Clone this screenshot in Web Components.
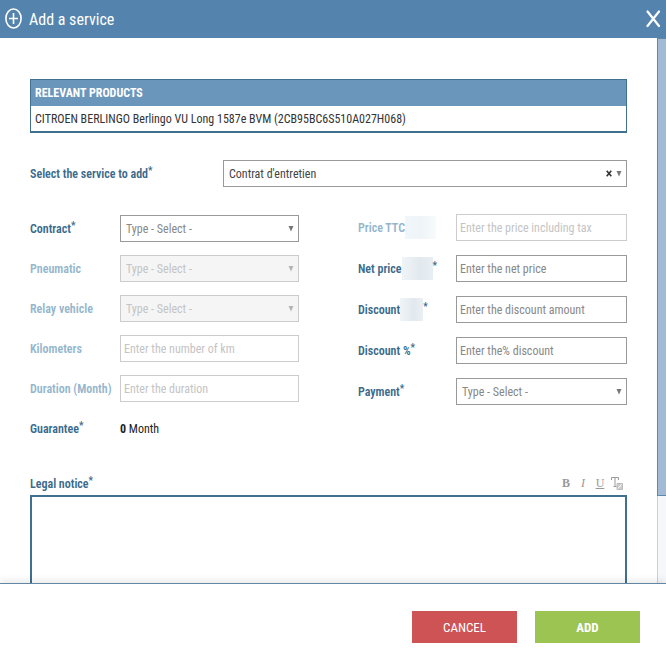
<!DOCTYPE html>
<html lang="en">
<head>
<meta charset="utf-8">
<meta name="viewport" content="width=device-width, initial-scale=1">
<title>Add a service</title>
<style>
  body {
    margin: 0;
    background: #fff;
    font-family: "Roboto Condensed", Roboto, "Liberation Sans", sans-serif;
    font-size: 13px;
    --ink: #3a6a8c;
    --line: #3f708e;
    --size: 12px;
  }
</style>
</head>
<body>

<service-dialog heading="Add a service">
  <product-list heading="Relevant products">CITROEN BERLINGO Berlingo VU Long 1587e BVM (2CB95BC6S510A027H068)</product-list>

  <form-field class="service" kind="select" label="Select the service to add" value="Contrat d'entretien" required clearable></form-field>

  <field-columns>
    <form-field slot="left" kind="select" label="Contract" value="Type - Select -" required></form-field>
    <form-field slot="left" kind="select" label="Pneumatic" value="Type - Select -" disabled></form-field>
    <form-field slot="left" kind="select" label="Relay vehicle" value="Type - Select -" disabled></form-field>
    <form-field slot="left" label="Kilometers" placeholder="Enter the number of km" disabled></form-field>
    <form-field slot="left" label="Duration (Month)" placeholder="Enter the duration" disabled></form-field>
    <form-field slot="left" kind="output" label="Guarantee" value="0" unit="Month" required></form-field>

    <form-field slot="right" label="Price TTC" placeholder="Enter the price including tax" masked disabled></form-field>
    <form-field slot="right" label="Net price" placeholder="Enter the net price" masked required></form-field>
    <form-field slot="right" label="Discount" placeholder="Enter the discount amount" masked="short" required></form-field>
    <form-field slot="right" label="Discount %" placeholder="Enter the% discount" required></form-field>
    <form-field slot="right" kind="select" label="Payment" value="Type - Select -" required></form-field>
  </field-columns>

  <notice-editor label="Legal notice"></notice-editor>

  <action-button slot="actions" tone="cancel">CANCEL</action-button>
  <action-button slot="actions" tone="confirm">ADD</action-button>
</service-dialog>

<script>
;(function () {
  class BaseElement extends HTMLElement {
    constructor () {
      super()
      this.attachShadow({ mode: 'open' })
    }

    connectedCallback () {
      this.shadowRoot.innerHTML = this.render()
      this.ready()
    }

    attr (name) {
      return this.getAttribute(name) || ''
    }

    ready () {}
  }

  class ServiceDialog extends BaseElement {
    render () {
      return `
<style>
  :host {
    display: flex;
    flex-direction: column;
    height: 100vh;
  }
  header {
    display: flex;
    align-items: center;
    gap: 7px;
    height: 38px;
    padding: 0 5px;
    box-sizing: border-box;
    background: #5484ae;
    color: #fff;
  }
  h1 {
    flex: 1;
    margin: 0;
    font-size: 16px;
    font-weight: 400;
  }
  .close {
    display: flex;
    padding: 0;
    border: 0;
    background: none;
    color: inherit;
    cursor: pointer;
  }
  .view {
    flex: 1;
    display: flex;
    min-height: 0;
  }
  .content {
    flex: 1;
    overflow-y: scroll;
    scrollbar-width: none;
    padding: 41px 30px 35px;
  }
  .content::-webkit-scrollbar {
    display: none;
  }
  ::slotted(.service) {
    --label-width: 193px;
    margin: 27px 0;
  }
  .track {
    flex: none;
    width: 8px;
    border-left: 1px solid #c3d3e4;
    background: #f5f7fb;
  }
  .thumb {
    margin-left: -1px;
    box-sizing: border-box;
    border: solid #5b89ab;
    border-width: 1px 0 1px 1px;
    background: #a2bad6;
  }
  footer {
    display: flex;
    justify-content: flex-end;
    gap: 18px;
    padding: 27px 26px 23px;
    border-top: 1px solid #6286a4;
    box-shadow: 0 -2px 8px rgba(0, 0, 0, .1);
    z-index: 1;
  }
</style>
<header>
  <svg width="17" height="22" viewBox="0 0 17 22" fill="none" stroke="currentColor" stroke-width="1.600" aria-hidden="true">
    <ellipse cx="8.500" cy="10.500" rx="7.600" ry="9.500"/>
    <path d="M8.500 5v11M4 10.500h9"/>
  </svg>
  <h1>${this.attr('heading')}</h1>
  <button class="close" type="button" aria-label="Close">
    <svg width="16" height="18" viewBox="0 0 16 18" fill="none" stroke="currentColor" stroke-width="2.200" stroke-linecap="round">
      <path d="M2.500 1.500L14 16M14 1.500L2.500 16"/>
    </svg>
  </button>
</header>
<div class="view">
  <div class="content"><slot></slot></div>
  <div class="track"><div class="thumb"></div></div>
</div>
<footer><slot name="actions"></slot></footer>`
    }

    ready () {
      this.content = this.shadowRoot.querySelector('.content')
      this.thumb = this.shadowRoot.querySelector('.thumb')
      this.content.addEventListener('scroll', () => this.updateThumb())
      this.observer = new ResizeObserver(() => this.updateThumb())
      this.observer.observe(this.content)
    }

    updateThumb () {
      const { clientHeight, scrollHeight, scrollTop } = this.content
      this.thumb.style.height = `${Math.round(clientHeight * clientHeight / scrollHeight)}px`
      this.thumb.style.transform = `translateY(${Math.round(scrollTop * clientHeight / scrollHeight)}px)`
    }

    disconnectedCallback () {
      this.observer.disconnect()
    }
  }

  class ProductList extends BaseElement {
    render () {
      return `
<style>
  :host {
    display: block;
  }
  table {
    width: 100%;
    border: 1px solid var(--line);
    border-bottom-width: 2px;
    border-spacing: 0;
    font-size: var(--size);
    line-height: 16px;
  }
  th, td {
    height: 26px;
    padding: 0 4px;
    box-sizing: border-box;
    text-align: left;
  }
  th {
    background: #6b96bc;
    color: #fff;
    text-transform: uppercase;
  }
  td {
    height: 25px;
    color: #333;
  }
</style>
<table>
  <thead><tr><th scope="col">${this.attr('heading')}</th></tr></thead>
  <tbody><tr><td><slot></slot></td></tr></tbody>
</table>`
    }
  }

  class FieldColumns extends BaseElement {
    render () {
      return `
<style>
  :host {
    display: grid;
    grid-template-columns: 1fr 1fr;
    gap: 59px;
  }
  div {
    display: flex;
    flex-direction: column;
    justify-content: flex-end;
    gap: 13px;
    padding-top: 1px;
    --label-width: 90px;
  }
  .right {
    justify-content: flex-start;
    gap: 14px;
    padding-top: 0;
    --label-width: 98px;
  }
</style>
<div><slot name="left"></slot></div>
<div class="right"><slot name="right"></slot></div>`
    }
  }

  class FormField extends BaseElement {
    control () {
      const disabled = this.hasAttribute('disabled') ? 'disabled' : ''
      switch (this.attr('kind')) {
        case 'select':
          return `
<span class="select">
  <select id="control" ${disabled}><option>${this.attr('value')}</option></select>
  <span class="tools">
    ${this.hasAttribute('clearable') ? '<button type="button" aria-label="Clear"><svg width="6" height="7" viewBox="0 0 6 7" fill="none" stroke="#333" stroke-width="1.600"><path d="M.7 .8L5.300 6.200M5.300 .8L.7 6.200"/></svg></button>' : ''}
    <svg width="6" height="6" viewBox="0 0 6 6"><path d="M.5 0h5L3 5.500z" fill="#777"/></svg>
  </span>
</span>`
        case 'output':
          return `<output id="control"><b>${this.attr('value')}</b> ${this.attr('unit')}</output>`
        default:
          return `<input id="control" type="text" placeholder="${this.attr('placeholder')}" ${disabled}>`
      }
    }

    render () {
      return `
<style>
  :host {
    display: flex;
    align-items: center;
    height: 27px;
    font-size: var(--size);
  }
  label {
    flex: none;
    display: flex;
    align-items: center;
    width: var(--label-width);
    color: var(--ink);
    font-weight: 600;
    white-space: nowrap;
  }
  sup {
    padding-bottom: 6px;
    font-size: 10px;
    line-height: 12px;
  }
  .mask {
    width: 31px;
    height: 23px;
    background: linear-gradient(90deg, #eff4f7, #e2e9ee 60%, #e9eff3);
  }
  :host([masked="short"]) .mask {
    width: 23px;
  }
  :host([disabled]) .mask {
    background: linear-gradient(90deg, #f0f6f9, #eef4f7 50%, #f8fbfc);
  }
  :host([disabled]) label {
    color: #94b6cd;
  }
  input, select {
    flex: 1;
    width: 100%;
    min-width: 0;
    height: 27px;
    padding: 0 3px;
    box-sizing: border-box;
    border: 1px solid #999;
    border-radius: 0;
    background: #fff;
    color: #888;
    font: inherit;
    outline: 0;
    appearance: none;
  }
  ::placeholder {
    color: #888;
    opacity: 1;
  }
  :disabled, :disabled::placeholder {
    border-color: #ccc;
    color: #c4c4c4;
    opacity: 1;
  }
  .select {
    flex: 1;
    display: grid;
    align-items: center;
    min-width: 0;
  }
  .select > * {
    grid-area: 1 / 1;
  }
  select {
    padding: 0 5px;
  }
  select:disabled {
    background: #f5f5f5;
  }
  select:disabled + .tools {
    opacity: .5;
  }
  :host([clearable]) select {
    color: #444;
  }
  .tools {
    display: flex;
    align-items: center;
    gap: 4px;
    justify-self: end;
    padding-right: 5px;
    pointer-events: none;
  }
  button {
    display: flex;
    padding: 0;
    border: 0;
    background: none;
    cursor: pointer;
    pointer-events: auto;
  }
  output {
    color: #222;
  }
</style>
<label for="control">
  <span>${this.attr('label')}</span>
  ${this.hasAttribute('masked') ? '<span class="mask"></span>' : ''}
  ${this.hasAttribute('required') ? '<sup>*</sup>' : ''}
</label>
${this.control()}`
    }
  }

  class NoticeEditor extends BaseElement {
    render () {
      return `
<style>
  :host {
    display: block;
    margin-top: 30px;
    font-size: var(--size);
  }
  .bar {
    display: flex;
    justify-content: space-between;
    align-items: center;
    height: 23px;
  }
  label {
    display: flex;
    align-items: center;
    color: var(--ink);
    font-weight: 600;
  }
  sup {
    padding-bottom: 6px;
    font-size: 10px;
    line-height: 12px;
  }
  .tools {
    display: flex;
    gap: 5px;
    padding: 0 4px 2px 0;
  }
  button {
    display: flex;
    justify-content: center;
    align-items: center;
    width: 12px;
    height: 16px;
    padding: 0;
    border: 0;
    background: none;
    color: #999;
    font: 12px/16px "Liberation Serif", serif;
    cursor: pointer;
  }
  textarea {
    display: block;
    width: 100%;
    height: 156px;
    padding: 6px;
    box-sizing: border-box;
    border: 2px solid var(--line);
    border-radius: 0;
    background: #fff;
    font: inherit;
    outline: 0;
    resize: none;
  }
</style>
<div class="bar">
  <label for="notice">${this.attr('label')}<sup>*</sup></label>
  <div class="tools">
    <button type="button" aria-label="Bold"><b>B</b></button>
    <button type="button" aria-label="Italic"><i>I</i></button>
    <button type="button" aria-label="Underline"><u>U</u></button>
    <button type="button" aria-label="Clear formatting">
      <svg width="12" height="14" viewBox="0 0 12 14" fill="none" stroke="#999">
        <path d="M.5 4V1.500h7V4M4 1.500v9M2.500 10.500h3"/>
        <path d="M6 7.500h5.500v6H6z" fill="#ccc" stroke="#bbb"/>
        <path d="M7 12.500l3.500-4" stroke="#fff"/>
      </svg>
    </button>
  </div>
</div>
<textarea id="notice"></textarea>`
    }
  }

  class ActionButton extends BaseElement {
    render () {
      return `
<style>
  :host {
    display: block;
  }
  button {
    width: 105px;
    height: 32px;
    padding: 0;
    border: 0;
    background: #cd5354;
    color: #fff;
    font: inherit;
    cursor: pointer;
  }
  :host([tone="confirm"]) button {
    background: #9bc453;
    font-weight: 700;
  }
</style>
<button type="button"><slot></slot></button>`
    }
  }

  customElements.define('service-dialog', ServiceDialog)
  customElements.define('product-list', ProductList)
  customElements.define('field-columns', FieldColumns)
  customElements.define('form-field', FormField)
  customElements.define('notice-editor', NoticeEditor)
  customElements.define('action-button', ActionButton)
})()
</script>
</body>
</html>
